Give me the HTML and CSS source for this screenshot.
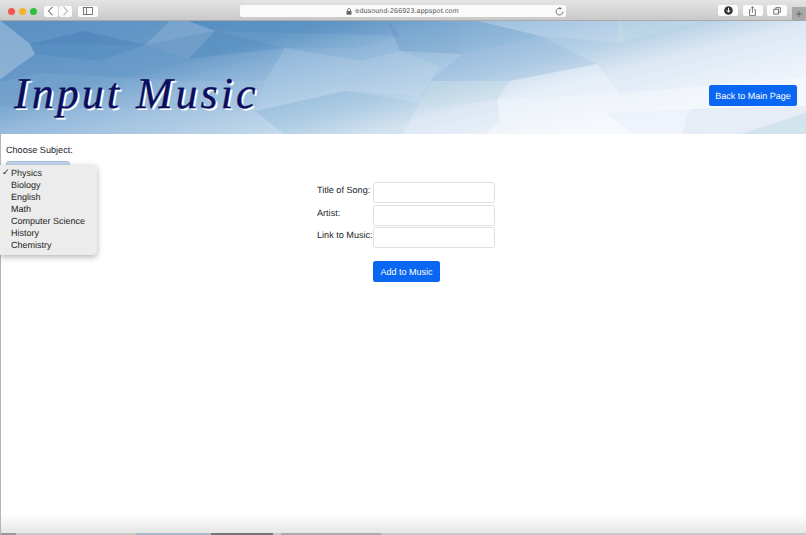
FILE: index.html
```html
<!DOCTYPE html>
<html lang="en">
<head>
<meta charset="utf-8">
<title>Input Music</title>
<link rel="stylesheet" href="styles.css">
</head>
<body>
<div class="window">
  <div class="toolbar">
    <div class="toolbar-left">
      <div class="lights"><span class="light red"></span><span class="light yellow"></span><span class="light green"></span></div>
      <div class="nav-pair">
        <span class="tool tool-half"><svg width="7" height="10" viewBox="0 0 7 10"><path d="M5.5 .8 1.500 5l4 4.200" fill="none" stroke="#444" stroke-width="1"/></svg></span>
        <span class="tool tool-half"><svg width="7" height="10" viewBox="0 0 7 10"><path d="M1.500 .8 5.500 5l-4 4.200" fill="none" stroke="#999" stroke-width="1"/></svg></span>
      </div>
      <span class="tool tool-wide"><svg width="10" height="8" viewBox="0 0 10 8"><rect x=".5" y=".5" width="9" height="7" fill="none" stroke="#555" stroke-width=".8"/><path d="M3.500 .5v7" stroke="#555" stroke-width=".8"/></svg></span>
    </div>
    <div class="address">
      <svg class="lock" width="6" height="7" viewBox="0 0 6 7"><path d="M1.500 3V2a1.500 1.500 0 0 1 3 0v1" fill="none" stroke="#666" stroke-width=".8"/><rect x=".5" y="3" width="5" height="3.700" fill="#666"/></svg>
      <span>edusound-266923.appspot.com</span>
      <svg class="reload" width="9" height="9" viewBox="0 0 9 9"><path d="M5.600 1.400A3.400 3.400 0 1 0 7.900 4.600" fill="none" stroke="#555" stroke-width=".8"/><path d="M4.600 0v2.800l2-1.400z" fill="#555"/></svg>
    </div>
    <div class="toolbar-right">
      <span class="tool tool-wide"><svg width="9" height="9" viewBox="0 0 9 9"><circle cx="4.500" cy="4.500" r="4.300" fill="#333"/><path d="M4.500 1.800v4M2.800 4.300l1.700 2 1.700-2" fill="none" stroke="#fff" stroke-width="1"/></svg></span>
      <span class="tool tool-wide"><svg width="9" height="10" viewBox="0 0 9 12"><path d="M2.500 4.500H1v7h7v-7H6.500M4.500 8V1M2.800 2.600 4.500 .9l1.700 1.700" fill="none" stroke="#555" stroke-width=".9"/></svg></span>
      <span class="tool tool-wide"><svg width="8" height="8" viewBox="0 0 10 10"><path d="M3.500 2.500V.8h5.700v5.700H7" fill="none" stroke="#555" stroke-width="1"/><rect x="1" y="2.800" width="5.700" height="6" fill="none" stroke="#555" stroke-width="1"/></svg></span>
      <span class="new-tab">+</span>
    </div>
  </div>

  <header class="banner">
    <svg class="banner-art" viewBox="0 0 806 113" preserveAspectRatio="none" aria-hidden="true">
      <defs>
        <linearGradient id="sky" gradientUnits="userSpaceOnUse" x1="0" y1="0" x2="76.500" y2="306">
          <stop offset="0" stop-color="#5a8fc2"/>
          <stop offset=".26" stop-color="#6a9cc9"/>
          <stop offset=".346" stop-color="#8bb3d8"/>
          <stop offset=".538" stop-color="#b7d1e7"/>
          <stop offset=".63" stop-color="#dde8f4"/>
          <stop offset=".77" stop-color="#eef3fb"/>
          <stop offset="1" stop-color="#f2f5fc"/>
        </linearGradient>
        <filter id="soft" x="-2%" y="-5%" width="104%" height="110%"><feGaussianBlur stdDeviation=".7"/></filter>
      </defs>
      <rect width="806" height="113" fill="url(#sky)"/>
      <g filter="url(#soft)">
        <polygon points="-5,-5 30,23 35,33 -5,62" fill="#fff" opacity=".25"/>
        <polygon points="30,23 85,10 145,24" fill="#1d5a9e" opacity=".2"/>
        <polygon points="30,23 145,24 100,40 35,33" fill="#1d5a9e" opacity=".1"/>
        <polygon points="145,24 175,-5 215,10 188,38" fill="#fff" opacity=".13"/>
        <polygon points="145,24 215,10 285,27 188,38" fill="#1d5a9e" opacity=".12"/>
        <polygon points="215,10 400,15 355,27 285,27" fill="#1d5a9e" opacity=".05"/>
        <polygon points="175,-5 385,-5 400,15 215,10" fill="#1d5a9e" opacity=".12"/>
        <polygon points="-5,62 40,52 188,60 265,60 255,90 -5,85" fill="#fff" opacity=".06"/>
        <polygon points="-5,85 255,90 290,118 -5,118" fill="#fff" opacity=".1"/>
        <polygon points="265,60 285,27 360,40 345,70 255,90" fill="#fff" opacity=".12"/>
        <polygon points="360,40 400,30 440,45 420,75 345,70" fill="#fff" opacity=".1"/>
        <polygon points="290,118 255,90 345,70 420,82 400,118" fill="#1d5a9e" opacity=".05"/>
        <polygon points="385,-5 458,-5 462,33 400,30" fill="#1d5a9e" opacity=".12"/>
        <polygon points="458,-5 540,15 462,33" fill="#1d5a9e" opacity=".1"/>
        <polygon points="458,-5 620,-5 625,22 540,15" fill="#fff" opacity=".12"/>
        <polygon points="620,-5 720,-5 616,22" fill="#c6e2e4" opacity=".35"/>
        <polygon points="462,33 540,15 597,43 510,60 430,60" fill="#1d5a9e" opacity=".06"/>
        <polygon points="430,60 510,60 497,79 420,88" fill="#c5dde6" opacity=".35"/>
        <polygon points="597,43 620,72 497,79 510,60" fill="#fff" opacity=".25"/>
        <polygon points="497,79 620,72 607,93 500,100" fill="#fff" opacity=".4"/>
        <polygon points="500,100 607,93 640,118 480,118" fill="#fff" opacity=".4"/>
        <polygon points="620,72 811,56 811,85 690,88 607,93" fill="#fff" opacity=".3"/>
        <polygon points="690,88 811,85 811,118 680,118" fill="#d6e0ee" opacity=".4"/>
        <polygon points="725,118 811,90 811,118" fill="#c6e0e6" opacity=".6"/>
      </g>
    </svg>
    <h1 class="title">Input Music</h1>
    <a class="btn btn-back" href="#">Back to Main Page</a>
  </header>

  <main class="content">
    <div class="subject">
      <label class="subject-label">Choose Subject:</label>
      <div class="select-stub"></div>
    </div>
    <form class="music-form">
      <div class="field-grid">
        <label class="field-label">Title of Song:</label><input class="field-input" type="text">
        <label class="field-label">Artist:</label><input class="field-input" type="text">
        <label class="field-label">Link to Music:</label><input class="field-input" type="text">
      </div>
      <button class="btn btn-add" type="button">Add to Music</button>
    </form>
  </main>

  <ul class="menu">
    <li class="menu-item checked">Physics</li>
    <li class="menu-item">Biology</li>
    <li class="menu-item">English</li>
    <li class="menu-item">Math</li>
    <li class="menu-item">Computer Science</li>
    <li class="menu-item">History</li>
    <li class="menu-item">Chemistry</li>
  </ul>

  <div class="bottom-fade"></div>
</div>
</body>
</html>
```
FILE: styles.css
```css
* { box-sizing: border-box; }
html, body { margin: 0; height: 100%; background: #fff; overflow: hidden; }
body { font-family: "Liberation Sans", Arial, sans-serif; font-size: 9.100px; color: #212529; text-rendering: geometricPrecision; }

.window { position: relative; display: flex; flex-direction: column; height: 535px; border-left: 1px solid #b5b5b5; }

.toolbar {
  display: flex; align-items: flex-start; justify-content: space-between;
  height: 21px; margin-left: -1px; padding-top: 5px;
  background: linear-gradient(#e4e4e4, #c9c9c9);
  border-bottom: 1px solid #a9a9a9;
}
.toolbar-left { display: flex; align-items: center; gap: 6px; height: 12px; padding-left: 8px; }
.lights { display: flex; gap: 4px; margin-right: 1px; }
.light { width: 7px; height: 7px; border-radius: 50%; }
.red { background: #f5554e; }
.yellow { background: #f3b32c; }
.green { background: #2dc03f; }
.nav-pair { display: flex; gap: 1px; }
.tool { display: flex; align-items: center; justify-content: center; height: 11px; background: #fbfbfb; border-radius: 2px; }
.tool-half { width: 13.500px; }
.tool-wide { width: 20px; }
.address {
  position: relative; display: flex; align-items: center; justify-content: center; gap: 3px;
  width: 326px; height: 12px; margin-left: -11px;
  background: #fafafa; border-radius: 2px; font-size: 7px; letter-spacing: .18px; color: #555;
}
.reload { position: absolute; right: 2px; top: 2px; }
.toolbar-right { display: flex; gap: 4.500px; height: 16px; position: relative; padding-right: 19px; }
.new-tab {
  position: absolute; right: 0; top: 2px; width: 14px; height: 13px;
  display: flex; align-items: center; justify-content: center;
  background: #a8a8a8; color: #666; font-size: 12px;
}

.banner {
  position: relative; display: flex; align-items: flex-start; justify-content: space-between;
  height: 113px; margin-left: -1px;
}
.banner-art { position: absolute; inset: 0; width: 100%; height: 100%; }
.title {
  position: relative; margin: 49px 0 0 14px;
  font-family: "Liberation Serif", serif; font-style: italic; font-weight: 400;
  font-size: 44px; line-height: 48px; letter-spacing: 3px; color: #0d0d5e;
  -webkit-text-stroke: .3px #0d0d5e;
  text-shadow: 2px 2px 0 #fff;
  white-space: nowrap;
}
.btn {
  display: inline-flex; align-items: center; justify-content: center;
  height: 21px; border: 0; border-radius: 2.500px; background: #0a67f2;
  color: #fff; font-family: inherit; font-size: 9px; text-decoration: none; white-space: nowrap;
}
.btn-back { position: relative; width: 88px; margin: 64px 9px 0 0; }

.content { position: relative; flex: 1; }
.subject { padding: 11px 0 0 5px; }
.subject-label { display: block; line-height: 11px; }
.select-stub { width: 64px; height: 10px; margin-top: 5px; background: #c2d5ea; border: 1px solid #a9c0da; border-radius: 3px; }

.music-form { position: absolute; top: 48px; left: 316px; display: flex; flex-direction: column; align-items: flex-start; }
.field-grid { display: grid; grid-template-columns: 56px 122px; row-gap: 1.500px; }
.field-label { line-height: 17px; white-space: nowrap; }
.field-input { height: 21px; padding: 0; border: 1px solid #dcdfe3; border-radius: 2.500px; background: #fff; }
.btn-add { width: 67px; margin: 13px 0 0 56px; }

.menu {
  position: absolute; top: 165px; left: -1px; width: 97px; height: 90px; margin: 0; padding: 1.500px 0 0; list-style: none;
  background: #ececec; border-radius: 0 4px 4px 0;
  box-shadow: 0 2px 6px rgba(0,0,0,.3); color: #222;
}
.menu-item { position: relative; height: 12.100px; padding-left: 11px; line-height: 12px; font-size: 9px; }
.checked::before { content: "✓"; position: absolute; left: 2px; top: 0; font-size: 9px; font-weight: 700; font-family: "DejaVu Sans", sans-serif; }

.bottom-fade {
  position: absolute; left: 0; right: 0; bottom: 0; height: 21px;
  background:
    linear-gradient(90deg, #999 0 15px, #c9c9c9 15px 135px, #a8b8c8 135px 210px, #777 210px 272px, #c9c9c9 272px 280px, #aaa 280px 380px, #c9c9c9 380px) bottom / 100% 2px no-repeat,
    linear-gradient(rgba(232,232,232,0), #e6e6e6 90%, #c4c4c4 90%, #c4c4c4);
}
```
